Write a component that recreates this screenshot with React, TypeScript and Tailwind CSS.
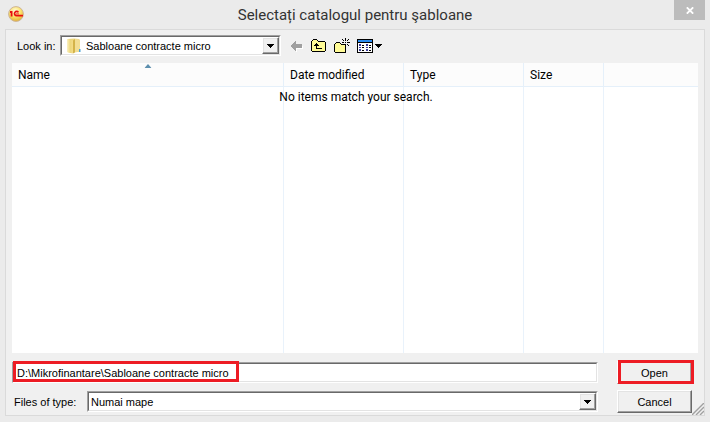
import type { ReactNode } from "react";

const columns = [
  { name: "Name", width: "w-[272px]" },
  { name: "Date modified", width: "w-[120px]" },
  { name: "Type", width: "w-[120px]" },
  { name: "Size", width: "w-[80px]" },
];

const sunken =
  "border border-t-[#a0a0a0] border-l-[#a0a0a0] border-r-white border-b-white bg-white";
const sunkenInner =
  "border border-t-[#696969] border-l-[#696969] border-r-[#e3e3e3] border-b-[#e3e3e3]";
const raised =
  "border border-t-white border-l-white border-r-[#696969] border-b-[#696969] bg-[#f0f0f0] shadow-[inset_-1px_-1px_0_#a0a0a0,inset_1px_1px_0_#e3e3e3]";

function AppLogo() {
  return (
    <svg viewBox="0 0 16 16" className="h-4 w-4" aria-hidden="true">
      <defs>
        <radialGradient id="ball" cx="0.45" cy="0.3" r="0.75">
          <stop offset="0" stopColor="#fffbe0" />
          <stop offset="0.5" stopColor="#fbe36a" />
          <stop offset="1" stopColor="#e0a828" />
        </radialGradient>
      </defs>
      <circle cx="8" cy="8" r="7.4" fill="url(#ball)" stroke="#cdb49a" />
      <path d="M2 6 H3.6 V10.5" fill="none" stroke="#e81010" strokeWidth="1.8" />
      <path
        d="M10.4 6.4 A2.1 2.1 0 1 0 8.2 9.6 H15"
        fill="none"
        stroke="#e81010"
        strokeWidth="1.7"
      />
      <path d="M8 7.9 H11" stroke="#e81010" strokeWidth="0.8" />
    </svg>
  );
}

function FolderIcon() {
  return (
    <svg viewBox="0 0 14 16" className="h-4 w-3.5" aria-hidden="true">
      <defs>
        <linearGradient id="folder" x1="0" x2="1">
          <stop offset="0" stopColor="#fbefb4" />
          <stop offset="0.5" stopColor="#ecd67c" />
          <stop offset="1" stopColor="#f4dc87" />
        </linearGradient>
      </defs>
      <path d="M0.5 1 L7 0.5 L12 1 V14 H0.5 Z" fill="#ecd67e" />
      <path d="M0.5 1 L6 2.5 V15.5 L0.5 14.5 Z" fill="url(#folder)" />
      <path d="M6 2.5 L8 1 V14.5 L6 15.5 Z" fill="#d3b34a" />
      <path d="M8 1 L13 1.5 V13.5 L8 14.5 Z" fill="#f2de94" />
      <rect x="12" y="11" width="1.5" height="3" fill="#4aa3d8" />
    </svg>
  );
}

function BackIcon() {
  return (
    <svg viewBox="0 0 14 12" className="h-3 w-3.5" shapeRendering="crispEdges" aria-hidden="true">
      <path d="M1 7 L7 12 V9 H13 V6" fill="#fff" />
      <path d="M0 6 L5 1 H6 V4 H12 V8 H6 V11 H5 Z" fill="#a0a0a0" />
    </svg>
  );
}

function UpIcon() {
  return (
    <svg viewBox="0 0 16 14" className="h-3.5 w-4" shapeRendering="crispEdges" aria-hidden="true">
      <path d="M2 0H6V1H7V2H14V3H15V12H14V13H1V12H0V2H1V1H2Z" fill="#000" />
      <path d="M2 1H6V2H7V3H14V12H1V2H2Z" fill="#fffb96" />
      <path d="M5 4H6V5H7V6H8V7H6V9H11V10H5V7H3V6H4V5H5Z" fill="#000" />
    </svg>
  );
}

function NewFolderIcon() {
  return (
    <svg viewBox="0 0 16 16" className="h-4 w-4" shapeRendering="crispEdges" aria-hidden="true">
      <path d="M2 4H6V5H7V6H12V15H1V14H0V6H1V5H2Z" fill="#000" />
      <path d="M2 5H6V6H7V7H11V14H1V6H2Z" fill="#fffb96" />
      <path
        d="M11 0h1v3h-1zM11 6h1v2h-1zM8 4h2v1h-2zM13 4h3v1h-3zM9 2h1v1h-1zM8 1h1v1h-1zM13 2h1v1h-1zM14 1h1v1h-1zM13 6h1v1h-1zM14 7h1v1h-1zM9 6h1v1h-1zM11 4h1v1h-1z"
        fill="#000"
      />
    </svg>
  );
}

function ViewIcon() {
  return (
    <svg viewBox="0 0 25 14" className="h-3.5 w-[25px]" shapeRendering="crispEdges" aria-hidden="true">
      <rect width="16" height="14" fill="#000" />
      <rect x="1" y="1" width="14" height="2" fill="#2a8cf0" />
      <rect x="1" y="4" width="14" height="9" fill="#fff" />
      <path
        d="M2 5h2v2h-2zM2 8h2v1h-2zM2 10h2v2h-2zM9 5h2v2h-2zM9 8h2v1h-2zM9 10h2v2h-2z"
        fill="#3c3c9c"
      />
      <path
        d="M5 6h2v1h-2zM5 8h2v1h-2zM5 11h2v1h-2zM12 6h2v1h-2zM12 8h2v1h-2zM12 11h2v1h-2z"
        fill="#000"
      />
      <path d="M18 5h7v1h-1v1h-1v1h-1v1h-1v-1h-1v-1h-1v-1h-1z" fill="#000" />
    </svg>
  );
}

function DropArrow() {
  return (
    <span
      className={`pointer-events-none absolute top-0 right-0 flex h-full w-[17px] items-center justify-center ${raised}`}
    >
      <svg viewBox="0 0 7 4" className="h-1 w-[7px]" shapeRendering="crispEdges" aria-hidden="true">
        <path d="M0 0h7v1h-1v1h-1v1h-1v1h-1v-1h-1v-1h-1v-1h-1z" fill="#000" />
      </svg>
    </span>
  );
}

function Combo({ id, value, icon }: { id: string; value: string; icon?: ReactNode }) {
  return (
    <div className={`h-[21px] w-full ${sunken}`}>
      <div className={`relative flex h-full items-center ${sunkenInner}`}>
        {icon && <span className="ml-[5px] shrink-0">{icon}</span>}
        <select
          id={id}
          className={`h-full min-w-0 flex-1 appearance-none bg-transparent outline-none ${icon ? "pl-[5px]" : "pl-[2px]"}`}
        >
          <option>{value}</option>
        </select>
        <DropArrow />
      </div>
    </div>
  );
}

export default function App() {
  return (
    <div className="flex min-h-screen flex-col bg-[#ebebeb] font-['Liberation_Sans',Arial,sans-serif] text-[11px] leading-4 text-black">
      <header className="grid h-[29px] grid-cols-[1fr_auto_1fr] px-[5px]">
        <span className="pt-1.5 pl-[3px]">
          <AppLogo />
        </span>
        <h1 className="pt-[5px] font-[Roboto,sans-serif] text-[15px] leading-5 text-[#333]">
          Selectați catalogul pentru şabloane
        </h1>
        <button
          type="button"
          aria-label="Close"
          className="flex h-5 w-[31px] items-center justify-center justify-self-end bg-[#bcbcbc]"
        >
          <svg viewBox="0 0 8 7" className="h-[7px] w-2" aria-hidden="true">
            <path d="M0.8 0.3 L7.2 6.7 M7.2 0.3 L0.8 6.7" stroke="#fff" strokeWidth="1.8" />
          </svg>
        </button>
      </header>

      <main className="relative mx-[5px] mb-1.5 flex flex-1 flex-col border border-[#dadada] bg-[#f0f0f0] px-1.5 pt-[5px] pb-0.5">
        <div className="flex items-center">
          <label htmlFor="look-in" className="w-12 shrink-0 pl-[5px]">
            Look in:
          </label>
          <div className="w-[221px]">
            <Combo id="look-in" value="Sabloane contracte micro" icon={<FolderIcon />} />
          </div>
          <div className="ml-[9px] flex items-center gap-[7px]">
            <button type="button" aria-label="Back">
              <BackIcon />
            </button>
            <button type="button" aria-label="Up one level">
              <UpIcon />
            </button>
            <button type="button" aria-label="New folder">
              <NewFolderIcon />
            </button>
            <button type="button" aria-label="View menu">
              <ViewIcon />
            </button>
          </div>
        </div>

        <div className="relative mt-[7px] flex min-h-[290px] flex-1 bg-white font-[Roboto,sans-serif] text-[12px]">
          <table className="w-full table-fixed border-separate border-spacing-0">
            <thead>
              <tr className="h-6 bg-[#fcfcfc]">
                {columns.map((c) => (
                  <th
                    key={c.name}
                    className={`relative border-r border-b border-[#e5f0fa] py-0 pl-1.5 text-left font-normal ${c.width}`}
                  >
                    {c.name}
                    {c.name === "Name" && (
                      <svg
                        viewBox="0 0 7 4"
                        className="absolute top-px left-1/2 h-1 w-[7px] -translate-x-1/2"
                        aria-hidden="true"
                      >
                        <path d="M3.5 0 L7 4 H0 Z" fill="#5d8fae" />
                      </svg>
                    )}
                  </th>
                ))}
                <td className="border-b border-[#e5f0fa]" />
              </tr>
            </thead>
            <tbody>
              <tr>
                {columns.map((c) => (
                  <td key={c.name} className="border-r border-[#e9f2fb]" />
                ))}
                <td />
              </tr>
            </tbody>
          </table>
          <p className="absolute inset-x-0 top-[26px] pl-0.5 text-center">
            No items match your search.
          </p>
        </div>

        <form
          className="mt-2 grid grid-cols-[1fr_75px] items-center gap-x-[19px] gap-y-1.5 pr-1.5"
          onSubmit={(e) => e.preventDefault()}
        >
          <div className={`relative h-[21px] ${sunken}`}>
            <div className={`h-full ${sunkenInner}`}>
              <input
                aria-label="Folder path"
                defaultValue="D:\Mikrofinantare\Sabloane contracte micro"
                className="block h-full w-full bg-transparent pl-[3px] outline-none"
              />
            </div>
            <span className="pointer-events-none absolute -top-0.5 left-0 h-[21px] w-[226px] border-3 border-[#ed1c24]" />
          </div>
          <div className="relative">
            <button type="submit" className={`block h-[23px] w-full ${raised}`}>
              Open
            </button>
            <span className="pointer-events-none absolute -top-px left-px h-6 w-[76px] border-3 border-[#ed1c24]" />
          </div>
          <div className="flex items-center">
            <label htmlFor="file-type" className="w-[75px] shrink-0 pl-0.5">
              Files of type:
            </label>
            <Combo id="file-type" value="Numai mape" />
          </div>
          <button type="button" className={`h-[23px] ${raised}`}>
            Cancel
          </button>
        </form>

        <svg
          viewBox="0 0 12 12"
          className="absolute right-0 bottom-0 h-3 w-3"
          aria-hidden="true"
        >
          <path d="M0 12 L12 0 M4 12 L12 4 M8 12 L12 8" stroke="#a0a0a0" strokeWidth="1.4" />
        </svg>
      </main>
    </div>
  );
}
